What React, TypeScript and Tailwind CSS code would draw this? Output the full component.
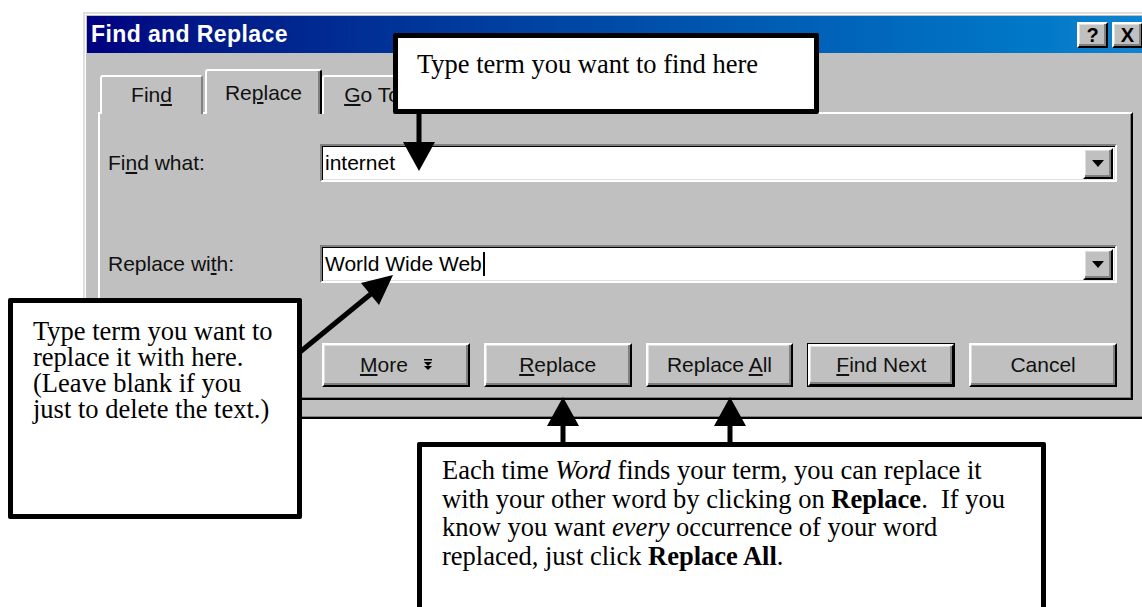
import React from 'react';

const ui = "font-['Liberation_Sans',Arial,sans-serif]";
const serif = "font-['Liberation_Serif','Times_New_Roman',serif]";

// raised 3D edge, Win98 style
const raised =
  'border-2 border-t-white border-l-white border-r-black border-b-black shadow-[inset_-2px_-2px_#808080,inset_1px_1px_#dfdfdf]';
const sunken =
  'border-2 border-t-[#808080] border-l-[#808080] border-r-white border-b-white shadow-[inset_1px_1px_#000,inset_-1px_-1px_#dfdfdf]';

const Combo = ({ value, caret }: { value: string; caret?: boolean }) => (
  <div className={`flex-1 h-[38px] bg-white flex items-center ${sunken}`}>
    <span className="flex-1 pl-[3px] text-[21px] leading-[24px] text-black flex items-center">
      {value}
      {caret && <span className="inline-block w-[2px] h-[24px] bg-black ml-[1px]" />}
    </span>
    <div className={`w-[30px] h-[31px] mr-[2px] bg-[#c0c0c0] flex items-center justify-center ${raised}`}>
      <svg width="12" height="7" viewBox="0 0 12 7">
        <path d="M0 0 H12 L6 7 Z" fill="#000" />
      </svg>
    </div>
  </div>
);

const Btn = ({ children, isDefault }: { children: React.ReactNode; isDefault?: boolean }) => (
  <div className={`w-[148px] h-[44px] ${isDefault ? 'border border-black' : ''}`}>
    <div
      className={`w-full h-full bg-[#c0c0c0] flex items-center justify-center text-[21px] leading-[24px] text-[#111] ${raised}`}
    >
      <span className="whitespace-pre">{children}</span>
    </div>
  </div>
);

const Tab = ({ children, selected, w }: { children: React.ReactNode; selected?: boolean; w: string }) => (
  <div
    className={`${w} relative bg-[#c0c0c0] border-t-2 border-l-2 border-t-white border-l-white rounded-t-[3px] text-[21px] leading-[24px] text-[#111] text-center ${
      selected ? 'h-[45px] z-10 pt-[10px] border-r-2 border-r-black shadow-[inset_-2px_0_#808080]' : 'h-[39px] pt-[6px] border-r-2 border-r-[#808080]'
    }`}
  >
    {children}
  </div>
);

const leftNote = ['Type term you want to', 'replace it with here.', '(Leave blank if you', 'just to delete the text.)'];

export default function App() {
  return (
    <div className={`relative w-[1142px] h-[607px] bg-white overflow-hidden ${ui}`}>
      {/* Dialog window */}
      <div className="pt-[12px] pl-[83px]">
        <div className="w-[1066px] h-[407px] bg-[#c0c0c0] p-[2px] border-2 border-t-[#dfdfdf] border-l-[#dfdfdf] border-r-black border-b-black shadow-[inset_1px_1px_white,inset_-1px_-1px_#808080] flex flex-col">
          {/* Title bar */}
          <div className="h-[37px] bg-gradient-to-r from-[#000080] to-[#1084d0] flex items-center pl-[4px] pr-[2px]">
            <span className="text-white font-bold text-[23px] tracking-[0.4px] leading-none">Find and Replace</span>
            <div className="ml-auto flex gap-[4px]">
              <div className={`w-[31px] h-[26px] bg-[#c0c0c0] flex items-center justify-center font-bold text-[20px] leading-none text-black ${raised}`}>
                ?
              </div>
              <div className={`w-[31px] h-[26px] bg-[#c0c0c0] flex items-center justify-center font-bold text-[20px] leading-none text-black ${raised}`}>
                X
              </div>
            </div>
          </div>

          {/* Body */}
          <div className="flex-1 pt-[16px] pl-[11px] pr-[12px] flex flex-col">
            <div className="flex items-end h-[45px] -mb-[2px] pl-[2px]">
              <Tab w="w-[103px]">
                Fin<span className="underline underline-offset-2">d</span>
              </Tab>
              <div className="w-[2px]" />
              <Tab w="w-[117px]" selected>
                Re<span className="underline underline-offset-2">p</span>lace
              </Tab>
              <Tab w="w-[100px]">
                <span className="underline underline-offset-2">G</span>o To
              </Tab>
            </div>

            {/* Tab panel */}
            <div className="h-[288px] border-2 border-t-white border-l-white border-r-black border-b-black shadow-[inset_-1px_-1px_#808080] pt-[30px] pl-[8px] pr-[14px] pb-[10px] flex flex-col text-[#111]">
              <div className="flex items-center">
                <div className="w-[212px] text-[21px] leading-[24px]">
                  Fi<span className="underline underline-offset-2">n</span>d what:
                </div>
                <Combo value="internet" />
              </div>
              <div className="flex items-center mt-[63px]">
                <div className="w-[212px] text-[21px] leading-[24px]">
                  Replace wi<span className="underline underline-offset-2">t</span>h:
                </div>
                <Combo value="World Wide Web" caret />
              </div>
              <div className="flex gap-[14px] mt-[60px] pl-[214px]">
                <Btn>
                  <span className="underline underline-offset-2">M</span>ore
                  <svg className="inline-block align-middle ml-[16px] -mt-[3px]" width="8" height="12" viewBox="0 0 8 12">
                    <path d="M0 0 H8 V1.5 H0 Z M0 3 H8 L4 7 Z M0 7 H8 L4 11 Z" fill="#000" />
                  </svg>
                </Btn>
                <Btn>
                  <span className="underline underline-offset-2">R</span>eplace
                </Btn>
                <Btn>
                  Replace <span className="underline underline-offset-2">A</span>ll
                </Btn>
                <Btn isDefault>
                  <span className="underline underline-offset-2">F</span>ind Next
                </Btn>
                <Btn>Cancel</Btn>
              </div>
            </div>
          </div>
        </div>
      </div>

      {/* Callouts */}
      <div className={`absolute left-[393px] top-[33px] w-[426px] h-[81px] bg-white border-[5px] border-black rounded-[2px] pl-[19px] pt-[11px] text-[26.5px] leading-[30px] text-black ${serif}`}>
        Type term you want to find here
      </div>

      <div className={`absolute left-[8px] top-[298px] w-[294px] h-[221px] bg-white border-[5px] border-black rounded-[2px] pl-[20px] pt-[15px] text-[26.5px] text-black ${serif}`}>
        {leftNote.map((line) => (
          <div key={line} className="h-[26px] leading-[26px] whitespace-nowrap">
            {line}
          </div>
        ))}
      </div>

      <div className={`absolute left-[417px] top-[442px] w-[629px] h-[190px] bg-white border-[5px] border-black rounded-[2px] pl-[20px] pt-[9px] text-[26.5px] leading-[28.5px] text-black whitespace-pre ${serif}`}>
        Each time <i>Word</i> finds your term, you can replace it
        <br />
        with your other word by clicking on <b>Replace</b>.{'  '}If you
        <br />
        know you want <i>every</i> occurrence of your word
        <br />
        replaced, just click <b>Replace All</b>.
      </div>

      {/* Arrows */}
      <svg className="absolute inset-0 pointer-events-none" width="1142" height="607" viewBox="0 0 1142 607">
        <line x1="419" y1="112" x2="419" y2="146" stroke="#000" strokeWidth="5" />
        <polygon points="403,142 435,142 419,171" fill="#000" />

        <line x1="300" y1="352" x2="372" y2="293" stroke="#000" strokeWidth="5" />
        <polygon points="393,275 379,305 361,283" fill="#000" />

        <line x1="563" y1="424" x2="563" y2="444" stroke="#000" strokeWidth="5" />
        <polygon points="547,426 579,426 563,397" fill="#000" />

        <line x1="730" y1="424" x2="730" y2="444" stroke="#000" strokeWidth="5" />
        <polygon points="714,426 746,426 730,397" fill="#000" />
      </svg>
    </div>
  );
}
